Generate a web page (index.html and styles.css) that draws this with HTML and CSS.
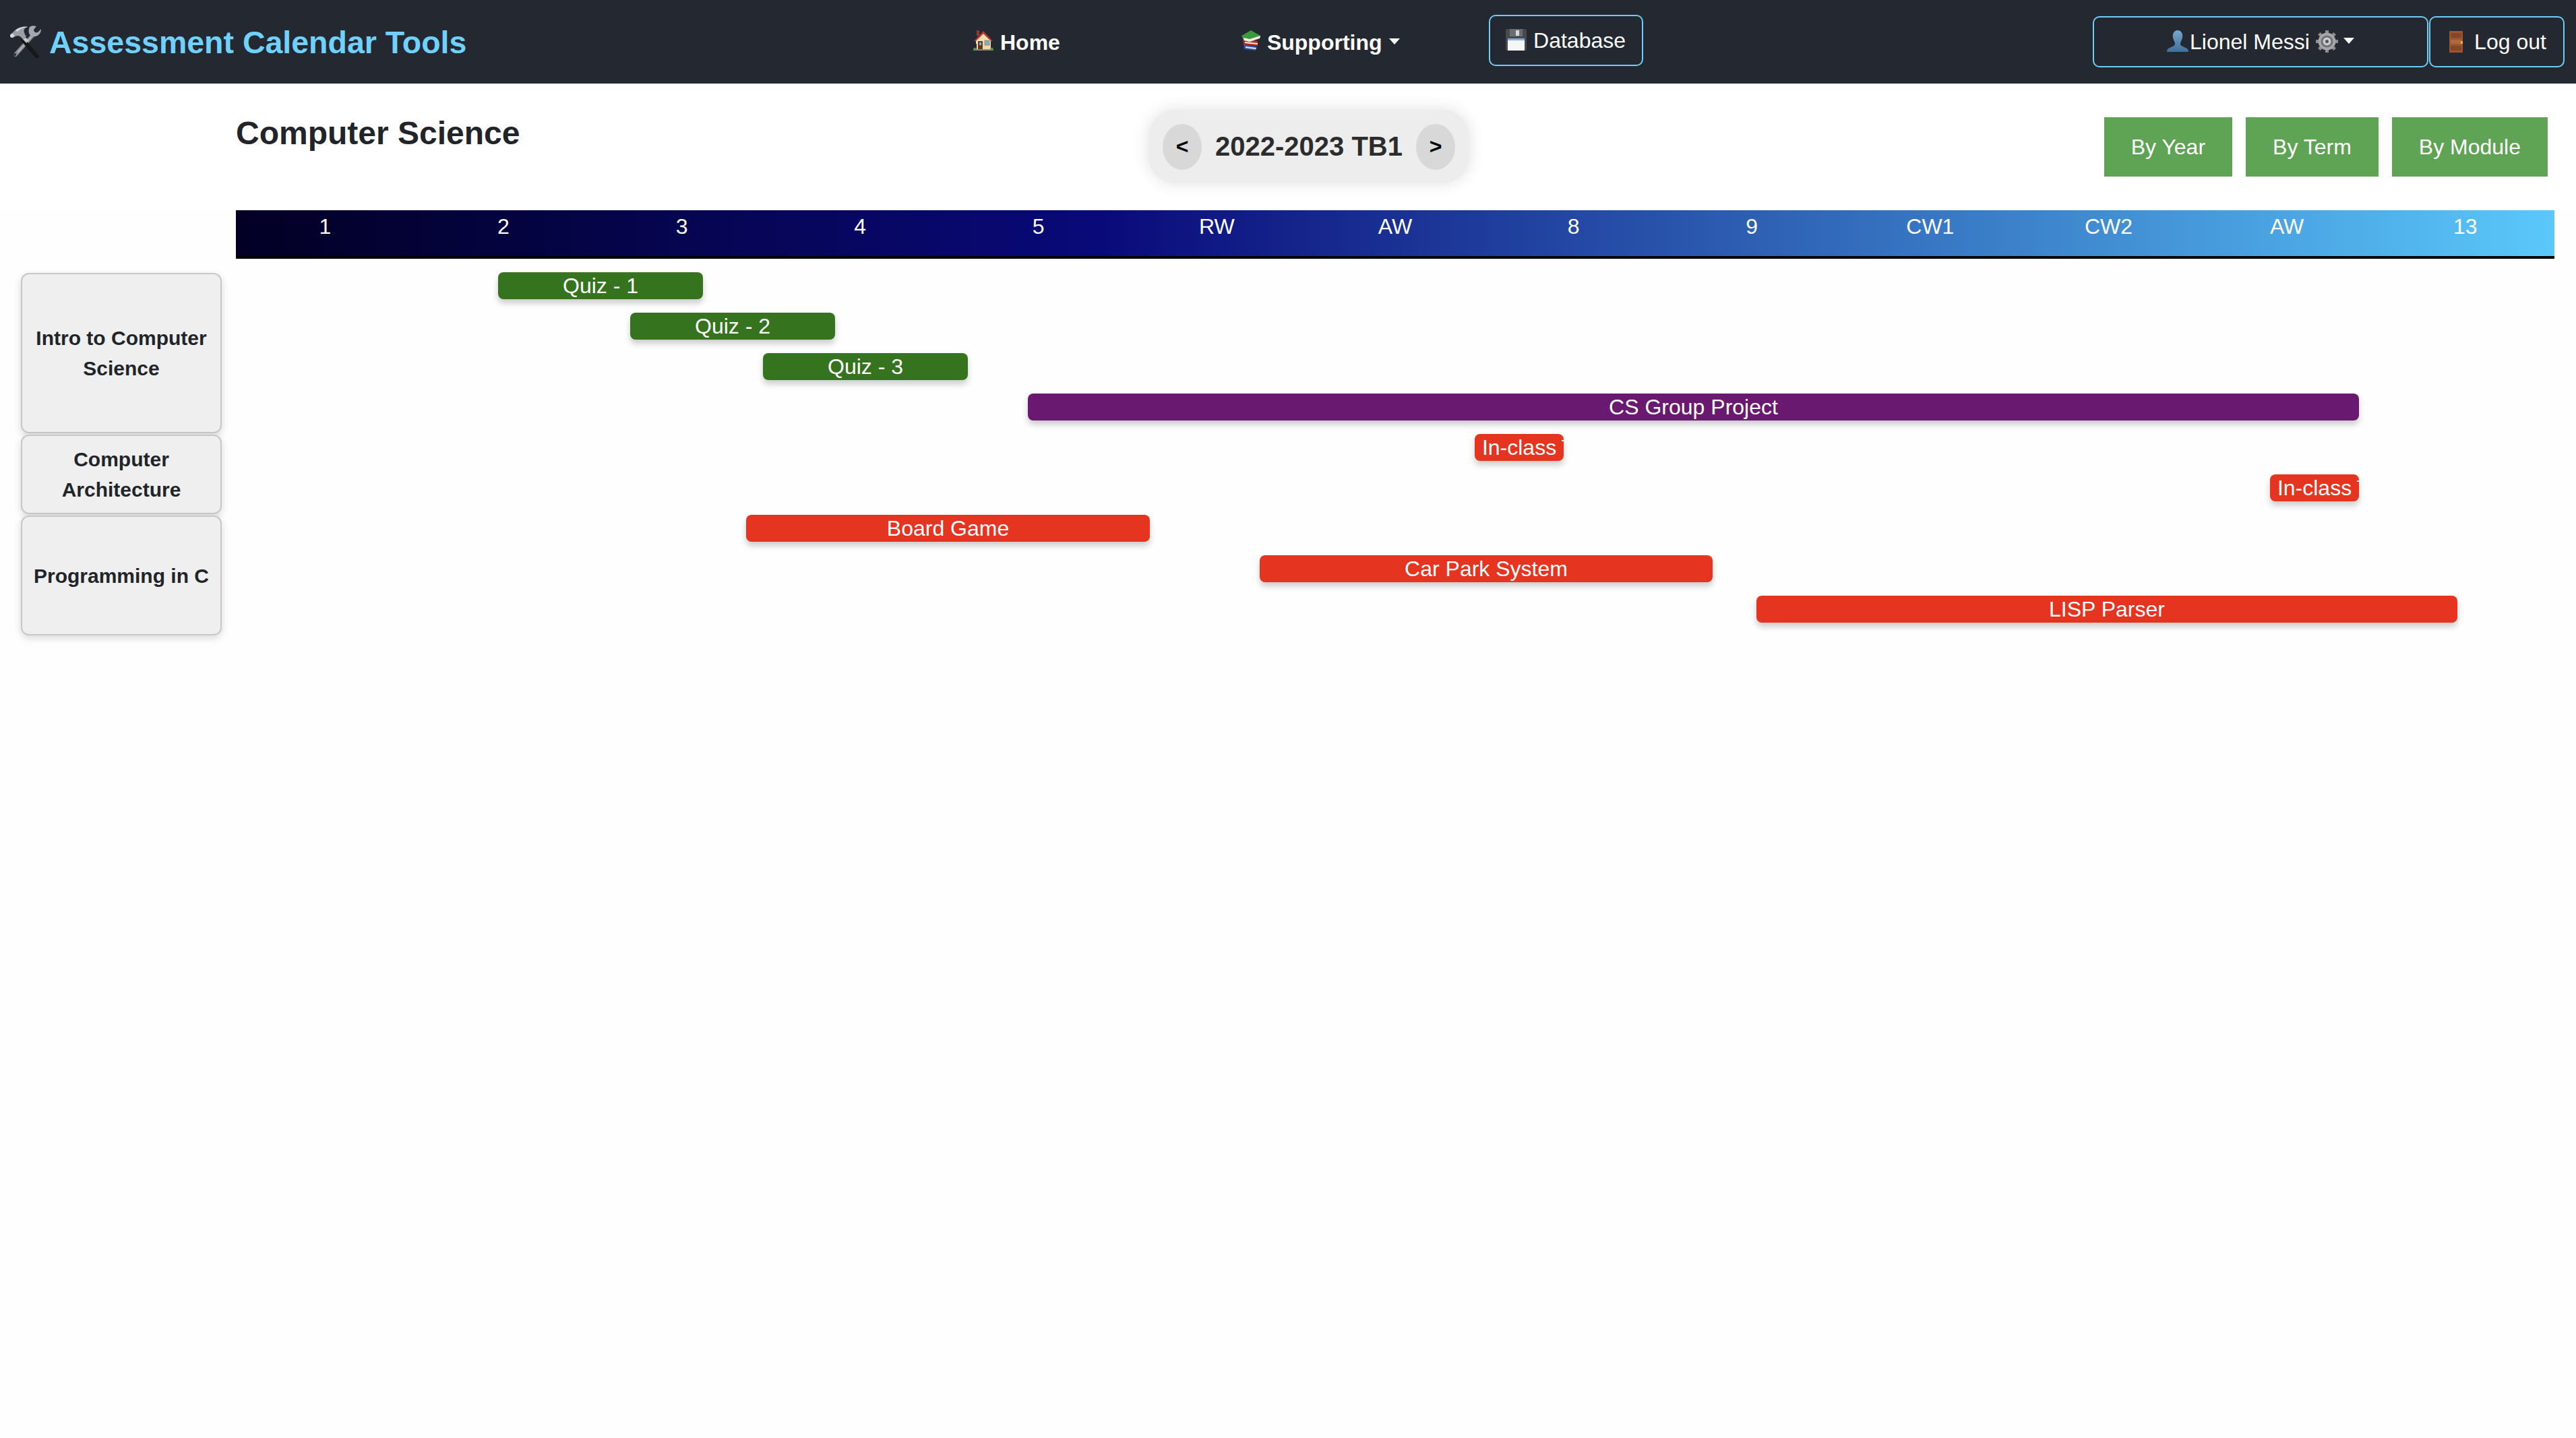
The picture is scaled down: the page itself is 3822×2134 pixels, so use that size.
FILE: index.html
```html
<!DOCTYPE html>
<html lang="en">
<head>
<title>Assessment Calendar Tools</title>
<meta charset="UTF-8">
<link rel="stylesheet" href="styles.css">
</head>
<body>

<nav class="navbar">
    <a class="brand">
        <svg class="icon-tools" viewBox="0 0 48 48">
            <path d="M35 14 L9 43" stroke="#85888d" stroke-width="6" stroke-linecap="round"/>
            <path d="M35 14 L12 40" stroke="#b4b6ba" stroke-width="2"/>
            <circle cx="8" cy="43" r="2" fill="#2a2c30"/>
            <path d="M30 2 C27 9 29 15 35 16 C42 17 47 12 47 5 L42 10 C38 11 36 9 36 6 L40 1 C36 0 33 0 30 2 Z" fill="#a4a7ab"/>
            <path d="M20 21 L41 46" stroke="#17181a" stroke-width="6" stroke-linecap="round"/>
            <path d="M22 19 L27 24" stroke="#c5c7ca" stroke-width="5"/>
            <path d="M2 13 L8 7 C14 2 22 0 28 2 C21 3 19 8 25 16 L20 21 C17 15 12 13 7 17 Z" fill="#9b9ea3"/>
            <path d="M9 7 C14 3 21 1 27 2 C20 3 15 5 12 9 Z" fill="#dcdee0"/>
            <circle cx="4" cy="15" r="3" fill="#d5d7da"/>
        </svg>
        <span>Assessment Calendar Tools</span>
    </a>

    <a class="nav-link nav-home">
        <svg class="icon-house" viewBox="0 0 30 30">
            <rect x="5" y="0" width="4" height="8" fill="#8c3a2c"/>
            <rect x="5" y="13" width="21" height="16" fill="#f0d9a8"/>
            <path d="M15 1 L29 16 L26 16 L15 5 L4 16 L1 16 Z" fill="#b8392c"/>
            <path d="M15 5 L26 16 L26 20 L4 20 L4 16 Z" fill="#f3deb0"/>
            <rect x="7" y="16" width="7" height="13" fill="#6b3320"/>
            <rect x="9" y="18" width="3" height="4" fill="#7fb4d8"/>
            <rect x="17" y="15" width="7" height="7" fill="#6fb1dc" stroke="#b08a58"/>
            <path d="M0 29 C0 25 4 25 5 28 L5 30 L0 30 Z M25 28 C26 25 30 25 30 29 L30 30 L25 30 Z" fill="#5c9a3c"/>
            <rect x="4" y="28" width="22" height="2" fill="#8a8578"/>
        </svg>
        <span>Home</span>
    </a>

    <a class="nav-link nav-supporting">
        <svg class="icon-books" viewBox="0 0 28 30">
            <path d="M3 21 L23 24 L21 30 L4 28 Z" fill="#2f57a8"/>
            <path d="M6 24 L22 26 L21 28 L6 26 Z" fill="#e8e8e8"/>
            <path d="M2 13 L24 16 L24 23 L3 21 Z" fill="#c8281f"/>
            <path d="M5 17 L24 19 L24 21 L5 19 Z" fill="#f1ece3"/>
            <path d="M0 8 L14 0 L28 8 L28 11 L12 16 L3 14 Z" fill="#3d9a3a"/>
            <path d="M3 11 L12 13 L28 8 L27 12 L12 17 L4 15 Z" fill="#f2f2ec"/>
        </svg>
        <span>Supporting</span>
        <i class="caret"></i>
    </a>

    <a class="nav-btn btn-database">
        <svg class="icon-floppy" viewBox="0 0 31 32">
            <rect width="31" height="32" rx="2" fill="#47494d"/>
            <rect x="6" y="0" width="19" height="11" fill="#6b6d71"/>
            <rect x="15" y="2" width="5" height="8" fill="#d9d9d9"/>
            <rect x="3" y="14" width="25" height="18" fill="#f6f6f6"/>
            <rect x="3" y="14" width="25" height="3" fill="#7eb0e0"/>
        </svg>
        <span>Database</span>
    </a>

    <a class="nav-btn btn-user">
        <svg class="icon-person" viewBox="0 0 32 32">
            <defs>
                <linearGradient id="personFill" x1="0" y1="0" x2="0" y2="1">
                    <stop offset="0" stop-color="#7ba6cc"/>
                    <stop offset="1" stop-color="#3f6f9c"/>
                </linearGradient>
            </defs>
            <path d="M16 0 C22 0 24 6 23 11 C22 15 20 17 20 20 C20 23 24 24 28 26 C31 27 32 29 32 32 L0 32 C0 29 1 27 4 26 C8 24 12 23 12 20 C12 17 10 15 9 11 C8 6 10 0 16 0 Z" fill="url(#personFill)"/>
        </svg>
        <span class="user-name">Lionel Messi</span>
        <svg class="icon-gear" viewBox="0 0 33 33">
            <path d="M16.5 0 V33 M0 16.5 H33 M4.8 4.8 L28.2 28.2 M28.2 4.8 L4.8 28.2" stroke="#8b8d90" stroke-width="5"/>
            <circle cx="16.5" cy="16.5" r="13" fill="#a3a5a8"/>
            <circle cx="16.5" cy="16.5" r="9" fill="#6e7073"/>
            <circle cx="16.5" cy="16.5" r="6" fill="#c9cbcd"/>
            <circle cx="16.5" cy="16.5" r="2.5" fill="#55575a"/>
        </svg>
        <i class="caret"></i>
    </a>

    <a class="nav-btn btn-logout">
        <svg class="icon-door" viewBox="0 0 20 32">
            <rect width="20" height="32" fill="#9c5630"/>
            <rect x="2" y="3" width="16" height="7" fill="#84472a"/>
            <rect x="2" y="13" width="16" height="6" fill="#b0683c"/>
            <rect x="2" y="22" width="16" height="7" fill="#84472a"/>
            <rect x="17" y="15" width="3" height="4" fill="#e0b83c"/>
        </svg>
        <span>Log out</span>
    </a>
</nav>

<div class="toolbar">
    <h1 class="page-title">Computer Science</h1>

    <div class="term-picker">
        <button class="term-arrow">&lt;</button>
        <span class="term-label">2022-2023 TB1</span>
        <button class="term-arrow">&gt;</button>
    </div>

    <div class="view-buttons">
        <a class="view-btn">By Year</a>
        <a class="view-btn">By Term</a>
        <a class="view-btn">By Module</a>
    </div>
</div>

<main class="calendar">
    <div class="weeks">
        <div>1</div><div>2</div><div>3</div><div>4</div><div>5</div>
        <div>RW</div><div>AW</div><div>8</div><div>9</div>
        <div>CW1</div><div>CW2</div><div>AW</div><div>13</div>
    </div>

    <div class="modules">
        <div class="module module-4">Intro to Computer Science</div>
        <div class="module module-2">Computer Architecture</div>
        <div class="module module-3">Programming in C</div>
    </div>

    <div class="rows">
        <div class="row"><div class="bar quiz" style="margin-left:389px;width:304px">Quiz - 1</div></div>
        <div class="row"><div class="bar quiz" style="margin-left:585px;width:304px">Quiz - 2</div></div>
        <div class="row"><div class="bar quiz" style="margin-left:782px;width:304px">Quiz - 3</div></div>
        <div class="row"><div class="bar group" style="margin-left:1175px;width:1975px">CS Group Project</div></div>
        <div class="row"><div class="bar coursework clipped" style="margin-left:1838px;width:132px">In-class</div></div>
        <div class="row"><div class="bar coursework clipped" style="margin-left:3018px;width:132px">In-class</div></div>
        <div class="row"><div class="bar coursework" style="margin-left:757px;width:599px">Board Game</div></div>
        <div class="row"><div class="bar coursework" style="margin-left:1519px;width:672px">Car Park System</div></div>
        <div class="row"><div class="bar coursework" style="margin-left:2256px;width:1040px">LISP Parser</div></div>
    </div>
</main>

</body>
</html>
```

FILE: styles.css
```css
html, body {
    height: 100%;
}
body {
    margin: 0;
    background-color: #fefefe;
    color: #212529;
    font-family: "Liberation Sans", Arial, sans-serif;
    font-size: 32px;
}

/* top bar */
.navbar {
    display: flex;
    align-items: center;
    height: 124px;
    padding: 0 17px 0 14px;
    box-sizing: border-box;
    background-color: #242830;
    color: #fff;
}
.brand {
    display: flex;
    align-items: center;
    gap: 11px;
    width: 1430px;
    flex: none;
    padding-top: 2px;
    box-sizing: border-box;
    color: #71d1fd;
    font-size: 46.5px;
    font-weight: bold;
}
.icon-tools {
    width: 48px;
    height: 48px;
    margin-top: -2px;
    fill: none;
}
.nav-link {
    display: flex;
    align-items: center;
    padding-top: 2px;
    font-weight: bold;
}
.nav-home {
    gap: 10px;
}
.nav-supporting {
    gap: 10px;
    margin-left: 269px;
}
.icon-house {
    width: 30px;
    height: 30px;
    margin-top: -6px;
}
.icon-books {
    width: 28px;
    height: 30px;
    margin-top: -6px;
}
.caret {
    width: 0;
    height: 0;
    margin-top: -4px;
    border-top: 9px solid #fff;
    border-left: 8.5px solid transparent;
    border-right: 8.5px solid transparent;
}
.nav-btn {
    display: flex;
    align-items: center;
    justify-content: center;
    box-sizing: border-box;
    height: 76px;
    border: 2px solid #6dcff6;
    border-radius: 10px;
}
.btn-database {
    gap: 10px;
    width: 229px;
    margin-left: 132px;
    margin-top: -4px;
}
.icon-floppy {
    width: 31px;
    height: 32px;
    margin-top: -2px;
}
.btn-user {
    width: 498px;
    margin-left: auto;
}
.icon-person {
    width: 32px;
    height: 32px;
    margin-top: -2px;
}
.user-name {
    margin-left: 2px;
}
.icon-gear {
    width: 33px;
    height: 33px;
    margin: -2px 8px 0 9px;
}
.btn-logout {
    gap: 17px;
    width: 201px;
    margin-left: 1px;
    padding-left: 3px;
}
.icon-door {
    width: 20px;
    height: 32px;
}

/* title, term picker and view buttons */
.toolbar {
    display: flex;
    align-items: flex-start;
    height: 188px;
    padding: 0 42px 0 350px;
    box-sizing: border-box;
    background-color: #fff;
}
.page-title {
    width: 1354px;
    flex: none;
    margin: 45px 0 0 0;
    font-size: 48px;
    line-height: 58px;
    font-weight: bold;
}
.term-picker {
    display: flex;
    align-items: center;
    justify-content: space-between;
    box-sizing: border-box;
    width: 476px;
    height: 109px;
    margin-top: 39px;
    padding: 0 21px;
    border-radius: 40px;
    background-color: #ededed;
    box-shadow: 0 0 24px rgba(0, 0, 0, 0.12);
}
.term-arrow {
    width: 58px;
    height: 68px;
    padding: 0;
    border: none;
    border-radius: 50%;
    background-color: #d8d8d8;
    color: #000;
    font-family: inherit;
    font-size: 32px;
    font-weight: bold;
}
.term-label {
    color: #2c2c2c;
    font-size: 40px;
    font-weight: bold;
}
.view-buttons {
    display: flex;
    gap: 20px;
    margin-top: 50px;
    margin-left: auto;
}
.view-btn {
    padding: 0 40px;
    background-color: #5fa354;
    color: #fff;
    line-height: 88px;
}

/* calendar */
.calendar {
    display: grid;
    grid-template-columns: 298px 3440px;
    column-gap: 21px;
    padding-left: 31px;
}
.weeks {
    grid-column: 2;
    display: grid;
    grid-template-columns: repeat(13, 1fr);
    height: 72px;
    box-sizing: border-box;
    margin-bottom: 20px;
    border-bottom: 4px solid #000;
    background-image: linear-gradient(90deg, #020024 0%, #090979 37%, #5ac8fa 100%);
    color: #fff;
    line-height: 48px;
    text-align: center;
}
.modules {
    display: flex;
    flex-direction: column;
}
.module {
    display: flex;
    align-items: center;
    justify-content: center;
    box-sizing: border-box;
    margin: 1px 0;
    padding: 0 16px;
    border: 2px solid #c8c8c8;
    border-radius: 12px;
    background-color: #efefef;
    box-shadow: 0 4px 12px rgba(0, 0, 0, 0.15);
    font-size: 30px;
    font-weight: bold;
    line-height: 45px;
    text-align: center;
}
.module-4 {
    height: 238px;
}
.module-2 {
    height: 118px;
}
.module-3 {
    height: 178px;
}
.row {
    height: 60px;
}
.bar {
    position: relative;
    box-sizing: border-box;
    height: 40px;
    padding: 0 10px;
    overflow: hidden;
    border-radius: 8px;
    box-shadow: 0 6px 10px rgba(0, 0, 0, 0.2);
    color: #fff;
    line-height: 40px;
    text-align: center;
    white-space: nowrap;
}
.clipped::after {
    content: "";
    position: absolute;
    top: 9px;
    right: 0;
    width: 3px;
    height: 2px;
    background-color: #fff;
}
.quiz {
    background-color: #36731f;
}
.group {
    background-color: #691970;
}
.coursework {
    background-color: #e5341f;
}
```
